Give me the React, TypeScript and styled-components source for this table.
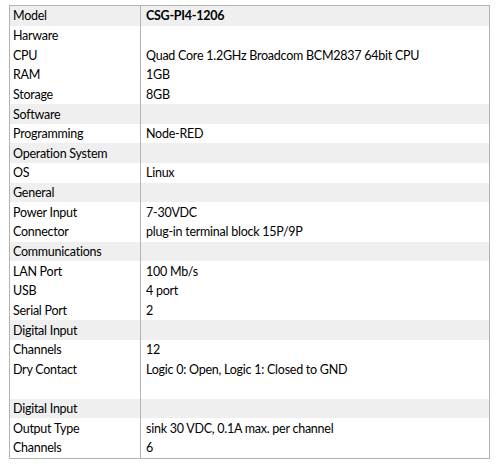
import React from "react";
import styled, { createGlobalStyle } from "styled-components";

const Global = createGlobalStyle`
  html, body { margin: 0; padding: 0; background: #ffffff; }
  body { font-family: Lato, "Open Sans", sans-serif; color: #000; }
`;

const Page = styled.div`
  padding: 5px 10px 0 9px;
`;

const Table = styled.div`
  display: grid;
  grid-template-columns: 130px 1fr;
  border: 1px solid #b3b3b3;
  width: 479px;
`;

const Cell = styled.div<{ $shade?: boolean; $bold?: boolean; $tall?: boolean; $right?: boolean }>`
  height: ${(p) => (p.$tall ? "39.3px" : "19.65px")};
  display: flex;
  align-items: ${(p) => (p.$tall ? "flex-start" : "center")};
  padding: ${(p) => (p.$tall ? "2px" : "0")} 0 0 ${(p) => (p.$right ? "5px" : "3px")};
  box-sizing: border-box;
  background: ${(p) => (p.$shade ? "#efefef" : "#ffffff")};
  font-size: 12.5px;
  letter-spacing: -0.25px;
  font-weight: ${(p) => (p.$bold ? 700 : 400)};
  white-space: nowrap;
  border-left: ${(p) => (p.$right ? "1px solid #b3b3b3" : "none")};
`;

type Row = { k: string; v?: string; shade?: boolean; bold?: boolean; tall?: boolean };

const rows: Row[] = [
  { k: "Model", v: "CSG-PI4-1206", shade: true, bold: true },
  { k: "Harware" },
  { k: "CPU", v: "Quad Core 1.2GHz Broadcom BCM2837 64bit CPU" },
  { k: "RAM", v: "1GB" },
  { k: "Storage", v: "8GB" },
  { k: "Software", shade: true },
  { k: "Programming", v: "Node-RED" },
  { k: "Operation System", shade: true },
  { k: "OS", v: "Linux" },
  { k: "General", shade: true },
  { k: "Power Input", v: "7-30VDC" },
  { k: "Connector", v: "plug-in terminal block 15P/9P" },
  { k: "Communications", shade: true },
  { k: "LAN Port", v: "100 Mb/s" },
  { k: "USB", v: "4 port" },
  { k: "Serial Port", v: "2" },
  { k: "Digital Input", shade: true },
  { k: "Channels", v: "12" },
  { k: "Dry Contact", v: "Logic 0: Open, Logic 1: Closed to GND", tall: true },
  { k: "Digital Input", shade: true },
  { k: "Output Type", v: "sink 30 VDC, 0.1A max. per channel" },
  { k: "Channels", v: "6" },
];

export default function App() {
  return (
    <Page>
      <Global />
      <Table>
        {rows.map((r, i) => (
          <React.Fragment key={i}>
            <Cell $shade={r.shade} $tall={r.tall}>{r.k}</Cell>
            <Cell $shade={r.shade} $tall={r.tall} $bold={r.bold} $right>
              {r.v ?? ""}
            </Cell>
          </React.Fragment>
        ))}
      </Table>
    </Page>
  );
}
